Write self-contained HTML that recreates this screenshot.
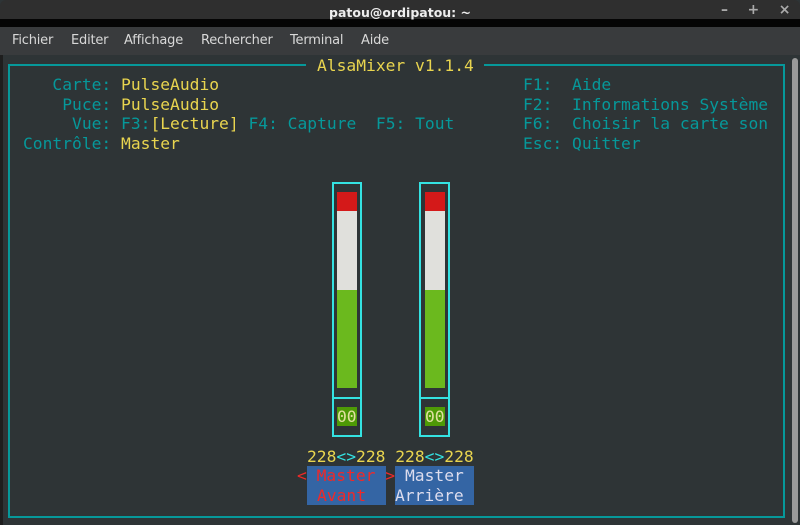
<!DOCTYPE html>
<html><head><meta charset="utf-8"><style>
body{margin:0;width:800px;height:525px;overflow:hidden;background:#2e3436;position:relative;font-family:"DejaVu Sans Mono","Liberation Mono",monospace}
.t{position:absolute;font-size:16.3px;line-height:19.6px;white-space:pre;color:#06989a}
.y{color:#e9d54f}
.a{position:absolute}
.m{position:absolute;top:33px;font:13px 'DejaVu Sans',sans-serif;color:#d8d8d8;letter-spacing:-0.2px}
</style></head><body>
<div class="a" style="left:0;top:0;width:800px;height:19px;background:#2f2f2f;border-radius:6px 6px 0 0"></div>
<div class="a" style="left:0;top:19px;width:800px;height:8px;background:#050505"></div>
<div class="a" style="left:0;top:5px;width:800px;text-align:center;font:bold 12.5px 'DejaVu Sans',sans-serif;color:#eee">patou@ordipatou: ~</div>
<div class="a" style="left:721px;top:2px;font:bold 14px 'DejaVu Sans',sans-serif;color:#aaa">–&nbsp;&nbsp;&nbsp;&nbsp;+&nbsp;&nbsp;&nbsp;&nbsp;×</div>
<div class="a" style="left:0;top:27px;width:800px;height:28px;background:#393b3d"></div>
<div class="m" style="left:12px">Fichier</div>
<div class="m" style="left:71px">Editer</div>
<div class="m" style="left:124px">Affichage</div>
<div class="m" style="left:201px">Rechercher</div>
<div class="m" style="left:290px">Terminal</div>
<div class="m" style="left:361px">Aide</div>
<div class="a" style="left:0;top:55px;width:3px;height:470px;background:#1e1e1e"></div>
<div class="a" style="left:792px;top:58px;width:6px;height:465px;background:#9a9a9a;border-radius:3px"></div>
<!-- frame -->
<div class="a" style="left:8px;top:64px;width:773px;height:450px;border:2px solid #06989a"></div>
<div class="a" style="left:306px;top:60px;width:178px;height:10px;background:#2e3436"></div>
<div class="t y" style="left:317px;top:56px">AlsaMixer v1.1.4</div>
<div class="t" style="left:23px;top:75px">   Carte: <span class="y">PulseAudio</span>
    Puce: <span class="y">PulseAudio</span>
     Vue: F3:<span class="y">[Lecture]</span> F4: Capture  F5: Tout
Contrôle: <span class="y">Master</span></div>
<div class="t" style="left:523px;top:75px">F1:  Aide
F2:  Informations Système
F6:  Choisir la carte son
Esc: Quitter</div>
<!-- bars -->
<div class="a" style="left:332px;top:182px;width:26px;height:251px;border:2px solid #34e2e2"></div>
<div class="a" style="left:332px;top:397px;width:30px;height:2px;background:#34e2e2"></div>
<div class="a" style="left:337px;top:192px;width:20px;height:19px;background:#d41919"></div>
<div class="a" style="left:337px;top:211px;width:20px;height:79px;background:#e0e0dc"></div>
<div class="a" style="left:337px;top:290px;width:20px;height:98px;background:#6bb91e"></div>
<div class="a" style="left:337px;top:407px;width:20px;height:19px;background:#4e9a06"></div>
<div class="t" style="left:337px;top:407px;color:#e0e0a0">00</div>
<div class="a" style="left:419px;top:182px;width:27px;height:251px;border:2px solid #34e2e2"></div>
<div class="a" style="left:419px;top:397px;width:31px;height:2px;background:#34e2e2"></div>
<div class="a" style="left:425px;top:192px;width:20px;height:19px;background:#d41919"></div>
<div class="a" style="left:425px;top:211px;width:20px;height:79px;background:#e0e0dc"></div>
<div class="a" style="left:425px;top:290px;width:20px;height:98px;background:#6bb91e"></div>
<div class="a" style="left:425px;top:407px;width:20px;height:19px;background:#4e9a06"></div>
<div class="t" style="left:425px;top:407px;color:#e0e0a0">00</div>
<div class="t y" style="left:307px;top:447px">228<span style="color:#34e2e2">&lt;&gt;</span>228 228<span style="color:#34e2e2">&lt;&gt;</span>228</div>
<div class="a" style="left:307px;top:466px;width:79px;height:39px;background:#3465a4"></div>
<div class="a" style="left:395px;top:466px;width:79px;height:39px;background:#3465a4"></div>
<div class="t" style="left:297px;top:466px;color:#ef2929">&lt; Master &gt;</div>
<div class="t" style="left:317px;top:486px;color:#ef2929">Avant</div>
<div class="t" style="left:405px;top:466px;color:#dde">Master</div>
<div class="t" style="left:395px;top:486px;color:#dde">Arrière</div>
</body></html>
